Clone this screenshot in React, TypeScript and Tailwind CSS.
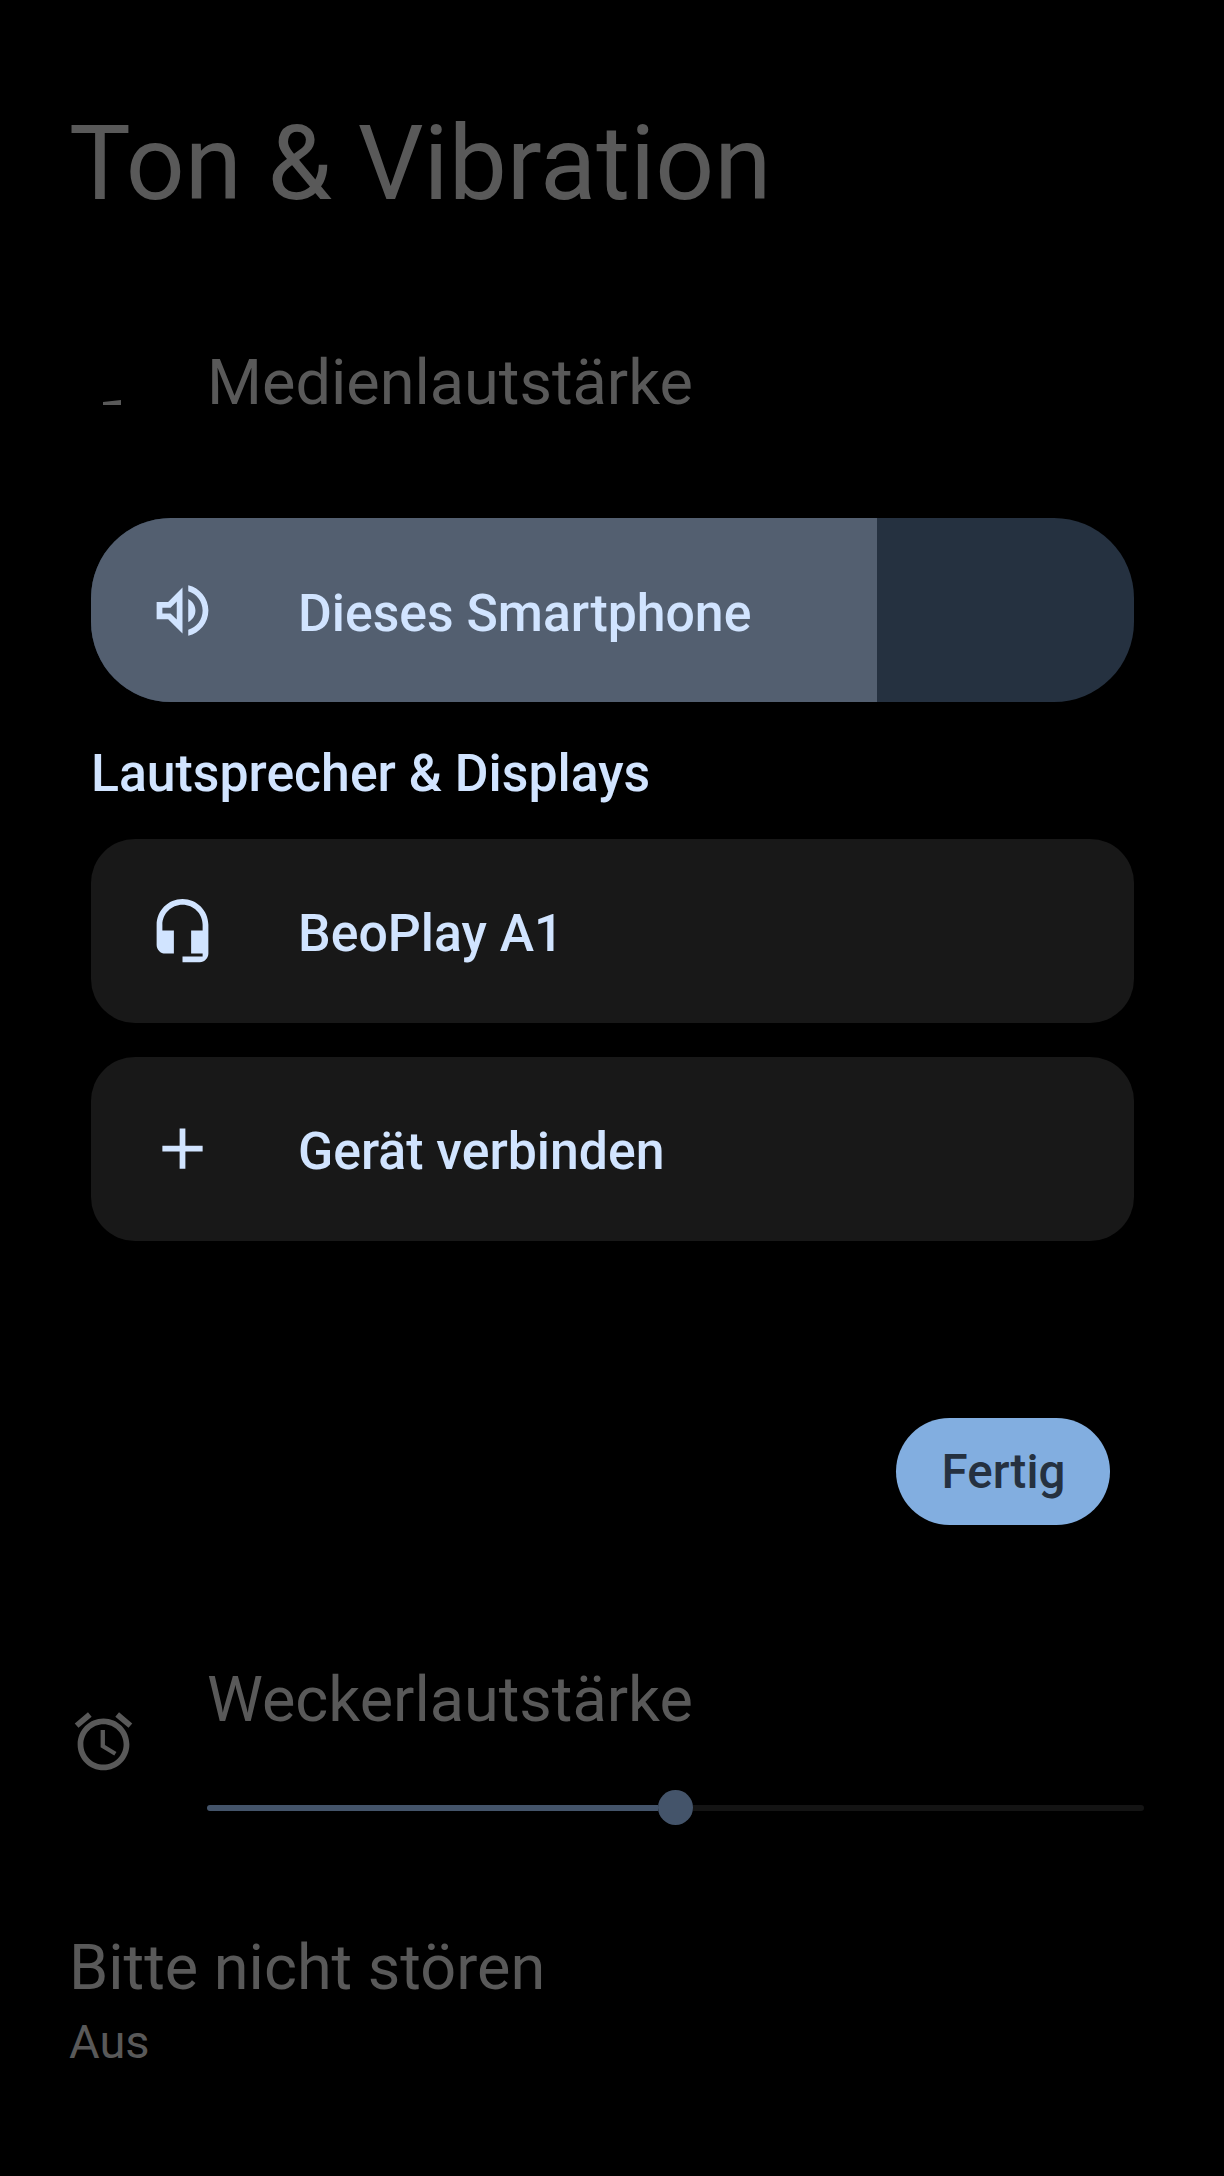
const Icon = ({ d, className }: { d: string; className: string }) => (
  <svg viewBox="0 0 24 24" fill="currentColor" className={className}>
    <path d={d} />
  </svg>
);

const VOLUME =
  "M3 9v6h4l5 5V4L7 9H3zm7-.17v6.34L7.83 13H5v-2h2.83L10 8.83zM16.5 12c0-1.77-1.02-3.29-2.5-4.03v8.05c1.48-.73 2.5-2.25 2.5-4.02zM14 3.23v2.06c2.89.86 5 3.54 5 6.71s-2.11 5.85-5 6.71v2.06c4.01-.91 7-4.49 7-8.77 0-4.28-2.99-7.86-7-8.77z";
const HEADSET =
  "M12 1c-4.97 0-9 4.03-9 9v7c0 1.66 1.34 3 3 3h3v-8H5v-2c0-3.87 3.13-7 7-7s7 3.13 7 7v2h-4v8h4v1h-7v2h6c1.66 0 3-1.34 3-3V10c0-4.97-4.03-9-9-9z";
const PLUS = "M19 13h-6v6h-2v-6H5v-2h6V5h2v6h6v2z";
const ALARM =
  "M22 5.72l-4.6-3.86-1.29 1.53 4.6 3.86L22 5.72zM7.88 3.39L6.6 1.86 2 5.71l1.29 1.53 4.59-3.85zM12.5 8H11v6l4.75 2.85.75-1.23-4-2.37V8zM12 4c-4.97 0-9 4.03-9 9s4.02 9 9 9c4.97 0 9-4.03 9-9s-4.03-9-9-9zm0 16c-3.87 0-7-3.13-7-7s3.13-7 7-7 7 3.13 7 7-3.13 7-7 7z";

const DeviceCard = ({ icon, label }: { icon: string; label: string }) => (
  <div className="flex h-[184px] items-center rounded-[44px] bg-[#181818] pl-[57px] text-[#d1e4ff]">
    <Icon d={icon} className="mb-[2px] h-[69px] w-[69px] shrink-0" />
    <span className="ml-[81px] pt-[5px] text-[51.75px] leading-[60px] font-medium">{label}</span>
  </div>
);

const App = () => {
  return (
    <div className="h-[2176px] w-[1224px] overflow-hidden bg-black font-['Roboto',sans-serif] text-[#595959]">
      <h1 className="ml-[69px] pt-[104px] text-[103.5px] leading-[120px]">Ton &amp; Vibration</h1>

      {/* row behind the sheet: only the top of its icon shows */}
      <div className="relative mt-[130px] h-[58px] pl-[207px] text-[63px] leading-[58px]">
        <span className="absolute top-[46px] left-[103px] h-[5px] w-[18px] bg-[#595959] [clip-path:polygon(0_40%,100%_0,100%_100%,0_100%)]" />
        Medienlautstärke
      </div>

      <div className="mt-[106px] ml-[91px] w-[1043px]">
        <div className="flex h-[184px] overflow-hidden rounded-[80px] bg-[#253140]">
          <div className="flex w-[786px] items-center bg-[#535f70] pl-[57px] text-[#d1e4ff]">
            <Icon d={VOLUME} className="h-[69px] w-[69px] shrink-0" />
            <span className="ml-[81px] pt-[7px] text-[51.75px] leading-[60px] font-medium">Dieses Smartphone</span>
          </div>
        </div>
        <div className="mt-[42px] text-[51.75px] leading-[60px] font-medium text-[#d1e4ff]">Lautsprecher &amp; Displays</div>
        <div className="mt-[35px] flex flex-col gap-[34px]">
          <DeviceCard icon={HEADSET} label="BeoPlay A1" />
          <DeviceCard icon={PLUS} label="Gerät verbinden" />
        </div>
      </div>

      <div className="mt-[177px] flex justify-end pr-[114px]">
        <button className="flex h-[107px] w-[214px] items-center justify-center rounded-full bg-[#82aee0] pt-[3px] pl-[1px] text-[47.5px] font-medium text-[#253140]">
          Fertig
        </button>
      </div>

      <div className="mt-[140px] flex pl-[69px]">
        <Icon d={ALARM} className="mt-[42px] h-[69px] w-[69px] shrink-0" />
        <div className="ml-[69px] w-[937px]">
          <div className="text-[63px] leading-[70px]">Weckerlautstärke</div>
          <div className="mt-[55px] flex h-[35px] items-center">
            <div className="h-[6px] w-[451px] rounded-l-full bg-[#44546a]" />
            <div className="h-[35px] w-[35px] shrink-0 rounded-full bg-[#44546a]" />
            <div className="h-[6px] flex-1 rounded-r-full bg-[#141414]" />
          </div>
        </div>
      </div>

      <div className="mt-[108px] ml-[69px] text-[63px] leading-[70px]">Bitte nicht stören</div>
      <div className="mt-[14px] ml-[69px] text-[47px] leading-[50px]">Aus</div>
    </div>
  );
};

export default App;
